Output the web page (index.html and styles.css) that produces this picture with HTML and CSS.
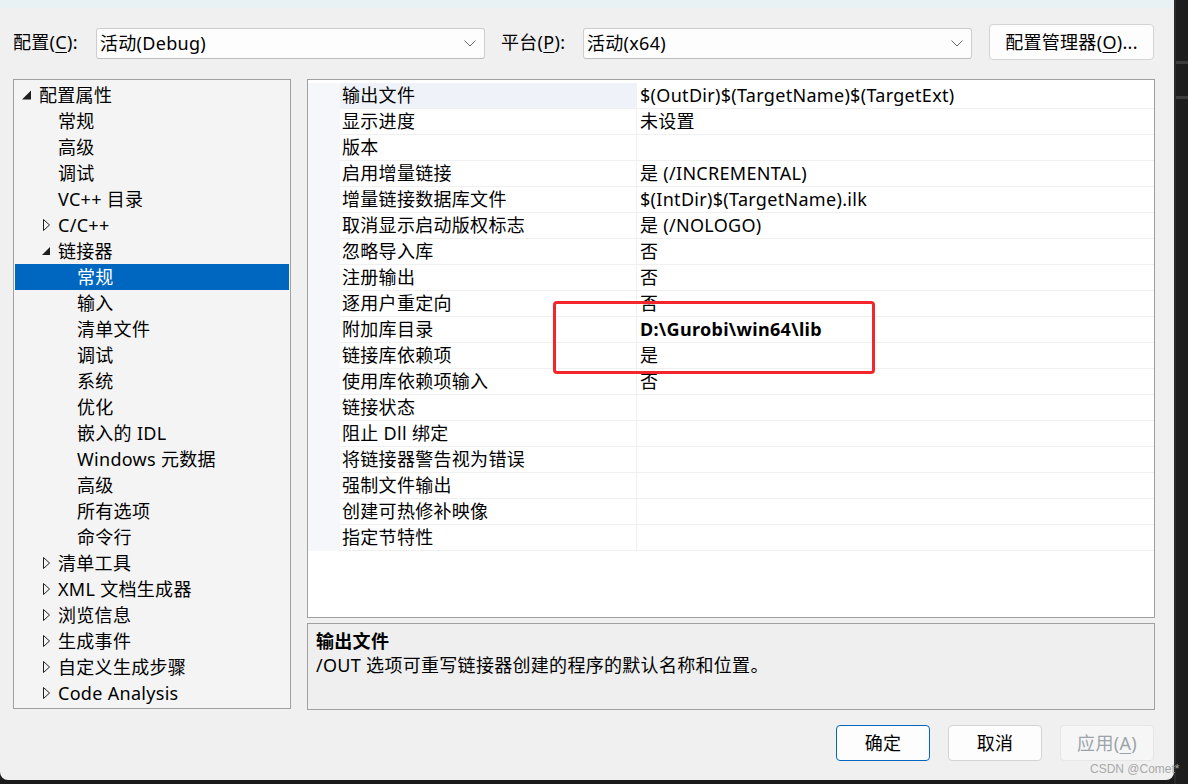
FILE: index.html
```html
<!DOCTYPE html>
<html lang="zh-CN">
<head>
<meta charset="utf-8">
<title>属性页</title>
<link rel="stylesheet" href="styles.css">
</head>
<body>
<div class="window">
  <div class="titlestrip"></div>
  <div class="toolbar">
    <span class="lbl lbl-config">配置(<u>C</u>):</span>
    <div class="combo"><span>活动(Debug)</span><svg class="chev" width="12" height="7" viewBox="0 0 12 7"><polyline points="0.5,0.5 6,6 11.5,0.5" fill="none" stroke="#6a6a6a" stroke-width="1"/></svg></div>
    <span class="lbl lbl-platform">平台(<u>P</u>):</span>
    <div class="combo"><span>活动(x64)</span><svg class="chev" width="12" height="7" viewBox="0 0 12 7"><polyline points="0.5,0.5 6,6 11.5,0.5" fill="none" stroke="#6a6a6a" stroke-width="1"/></svg></div>
    <button class="btn btn-manager">配置管理器(<u>O</u>)...</button>
  </div>

  <div class="main">
    <div class="tree">
      <div class="node lvl0"><span class="tog"><svg width="10" height="12" viewBox="0 0 10 12"><polygon points="9,1.5 9,10.5 0,10.5" fill="#1e1e1e"/></svg></span>配置属性</div>
      <div class="node lvl1"><span class="tog"></span>常规</div>
      <div class="node lvl1"><span class="tog"></span>高级</div>
      <div class="node lvl1"><span class="tog"></span>调试</div>
      <div class="node lvl1"><span class="tog"></span>VC++ 目录</div>
      <div class="node lvl1"><span class="tog"><svg width="10" height="12" viewBox="0 0 10 12"><polygon points="2.5,0.5 8.5,6 2.5,11.5" fill="none" stroke="#1e1e1e" stroke-width="1"/></svg></span>C/C++</div>
      <div class="node lvl1"><span class="tog"><svg width="10" height="12" viewBox="0 0 10 12"><polygon points="9,2 9,10 1,10" fill="#1e1e1e"/></svg></span>链接器</div>
      <div class="node lvl2 selected"><span class="tog"></span>常规</div>
      <div class="node lvl2"><span class="tog"></span>输入</div>
      <div class="node lvl2"><span class="tog"></span>清单文件</div>
      <div class="node lvl2"><span class="tog"></span>调试</div>
      <div class="node lvl2"><span class="tog"></span>系统</div>
      <div class="node lvl2"><span class="tog"></span>优化</div>
      <div class="node lvl2"><span class="tog"></span>嵌入的 IDL</div>
      <div class="node lvl2"><span class="tog"></span>Windows 元数据</div>
      <div class="node lvl2"><span class="tog"></span>高级</div>
      <div class="node lvl2"><span class="tog"></span>所有选项</div>
      <div class="node lvl2"><span class="tog"></span>命令行</div>
      <div class="node lvl1"><span class="tog"><svg width="10" height="12" viewBox="0 0 10 12"><polygon points="2.5,0.5 8.5,6 2.5,11.5" fill="none" stroke="#1e1e1e" stroke-width="1"/></svg></span>清单工具</div>
      <div class="node lvl1"><span class="tog"><svg width="10" height="12" viewBox="0 0 10 12"><polygon points="2.5,0.5 8.5,6 2.5,11.5" fill="none" stroke="#1e1e1e" stroke-width="1"/></svg></span>XML 文档生成器</div>
      <div class="node lvl1"><span class="tog"><svg width="10" height="12" viewBox="0 0 10 12"><polygon points="2.5,0.5 8.5,6 2.5,11.5" fill="none" stroke="#1e1e1e" stroke-width="1"/></svg></span>浏览信息</div>
      <div class="node lvl1"><span class="tog"><svg width="10" height="12" viewBox="0 0 10 12"><polygon points="2.5,0.5 8.5,6 2.5,11.5" fill="none" stroke="#1e1e1e" stroke-width="1"/></svg></span>生成事件</div>
      <div class="node lvl1"><span class="tog"><svg width="10" height="12" viewBox="0 0 10 12"><polygon points="2.5,0.5 8.5,6 2.5,11.5" fill="none" stroke="#1e1e1e" stroke-width="1"/></svg></span>自定义生成步骤</div>
      <div class="node lvl1"><span class="tog"><svg width="10" height="12" viewBox="0 0 10 12"><polygon points="2.5,0.5 8.5,6 2.5,11.5" fill="none" stroke="#1e1e1e" stroke-width="1"/></svg></span>Code Analysis</div>
    </div>

    <div class="right">
      <div class="grid">
        <div class="prow sel"><div class="gut"></div><div class="pname">输出文件</div><div class="pval">$(OutDir)$(TargetName)$(TargetExt)</div></div>
        <div class="prow"><div class="gut"></div><div class="pname">显示进度</div><div class="pval">未设置</div></div>
        <div class="prow"><div class="gut"></div><div class="pname">版本</div><div class="pval"></div></div>
        <div class="prow"><div class="gut"></div><div class="pname">启用增量链接</div><div class="pval">是 (/INCREMENTAL)</div></div>
        <div class="prow"><div class="gut"></div><div class="pname">增量链接数据库文件</div><div class="pval">$(IntDir)$(TargetName).ilk</div></div>
        <div class="prow"><div class="gut"></div><div class="pname">取消显示启动版权标志</div><div class="pval">是 (/NOLOGO)</div></div>
        <div class="prow"><div class="gut"></div><div class="pname">忽略导入库</div><div class="pval">否</div></div>
        <div class="prow"><div class="gut"></div><div class="pname">注册输出</div><div class="pval">否</div></div>
        <div class="prow"><div class="gut"></div><div class="pname">逐用户重定向</div><div class="pval">否</div></div>
        <div class="prow"><div class="gut"></div><div class="pname">附加库目录</div><div class="pval bold">D:\Gurobi\win64\lib</div></div>
        <div class="prow"><div class="gut"></div><div class="pname">链接库依赖项</div><div class="pval">是</div></div>
        <div class="prow"><div class="gut"></div><div class="pname">使用库依赖项输入</div><div class="pval">否</div></div>
        <div class="prow"><div class="gut"></div><div class="pname">链接状态</div><div class="pval"></div></div>
        <div class="prow"><div class="gut"></div><div class="pname">阻止 Dll 绑定</div><div class="pval"></div></div>
        <div class="prow"><div class="gut"></div><div class="pname">将链接器警告视为错误</div><div class="pval"></div></div>
        <div class="prow"><div class="gut"></div><div class="pname">强制文件输出</div><div class="pval"></div></div>
        <div class="prow"><div class="gut"></div><div class="pname">创建可热修补映像</div><div class="pval"></div></div>
        <div class="prow"><div class="gut"></div><div class="pname">指定节特性</div><div class="pval"></div></div>
      </div>
      <div class="desc">
        <div class="desc-title">输出文件</div>
        <div class="desc-text">/OUT 选项可重写链接器创建的程序的默认名称和位置。</div>
      </div>
    </div>
  </div>

  <div class="footer">
    <button class="btn btn-ok">确定</button>
    <button class="btn">取消</button>
    <button class="btn btn-disabled">应用(<u>A</u>)</button>
  </div>

  <div class="highlight"></div>
  <div class="watermark">CSDN @Comet*</div>
</div>
<div class="side">
  <div class="band band1"></div>
  <div class="band band2"></div>
</div>
</body>
</html>
```

FILE: styles.css
```css
html, body {
  margin: 0;
  padding: 0;
}
body {
  width: 1188px;
  height: 784px;
  overflow: hidden;
  background: #1b1b1b;
  display: flex;
  align-items: flex-start;
  font-family: "Noto Sans", "Noto Sans CJK SC", sans-serif;
  font-size: 18px;
  letter-spacing: 0.3px;
  color: #000;
}
.window {
  position: relative;
  width: 1174px;
  height: 780px;
  background: #f0f0f0;
  border-radius: 0 0 8px 8px;
  display: flex;
  flex-direction: column;
  flex-shrink: 0;
}
.titlestrip {
  height: 8px;
  background: #e8f1f4;
}
.toolbar {
  margin-top: 16px;
  height: 36px;
  padding-left: 13px;
  display: flex;
  align-items: center;
}
.lbl {
  line-height: 24px;
  white-space: nowrap;
}
.lbl-config { width: 83px; }
.lbl-platform { width: 82px; margin-left: 16px; }
u { text-decoration-thickness: 1px; text-underline-offset: 3px; }
.combo {
  box-sizing: border-box;
  width: 389px;
  height: 31px;
  margin-top: 2px;
  background: #fdfdfd;
  border: 1px solid #cdcdcd;
  border-bottom-color: #bdbdbd;
  border-radius: 3px;
  display: flex;
  align-items: center;
  justify-content: space-between;
  padding: 0 8px 0 3px;
  line-height: 24px;
}
.chev { display: block; }
.btn {
  box-sizing: border-box;
  font-family: inherit;
  font-size: 18px;
  letter-spacing: 0.3px;
  color: #000;
  background: #fdfdfd;
  border: 1px solid #d3d3d3;
  border-radius: 4px;
  height: 36px;
  width: 94px;
  padding: 0;
  line-height: 24px;
}
.btn-manager {
  width: 165px;
  margin-left: 17px;
}

.main {
  margin-top: 19px;
  height: 631px;
  padding-left: 13px;
  display: flex;
  gap: 16px;
}
.tree {
  box-sizing: border-box;
  width: 278px;
  height: 630px;
  border: 1px solid #a0a0a0;
  background: #f4f4f4;
  padding: 2px 1px 0;
}
.node {
  height: 26px;
  line-height: 26px;
  display: flex;
  align-items: center;
  white-space: nowrap;
}
.lvl0 { padding-left: 7px; }
.lvl1 { padding-left: 26px; }
.lvl2 { padding-left: 45px; }
.tog {
  width: 17px;
  height: 26px;
  display: flex;
  align-items: center;
  flex-shrink: 0;
}
.tog svg { display: block; }
.node.selected {
  background: #0067c0;
  color: #fff;
}

.right {
  width: 848px;
  display: flex;
  flex-direction: column;
  gap: 5px;
}
.grid {
  box-sizing: border-box;
  height: 539px;
  border: 1px solid #a0a0a0;
  background: #fff;
  padding-top: 3px;
}
.prow {
  display: grid;
  grid-template-columns: 32px 296px 1fr;
  height: 26px;
}
.gut {
  background: #f5f7fa;
}
.pname, .pval {
  box-sizing: border-box;
  height: 26px;
  line-height: 25px;
  border-bottom: 1px solid #f0f0f0;
  white-space: nowrap;
}
.pname { padding-left: 2px; }
.pval {
  padding-left: 3px;
  border-left: 1px solid #f0f0f0;
}
.prow.sel .pname { background: #eff3f9; }
.pval.bold { font-weight: bold; }

.desc {
  box-sizing: border-box;
  height: 87px;
  border: 1px solid #a0a0a0;
  background: #efefef;
  padding: 5px 8px 0;
  line-height: 24px;
}
.desc-title { font-weight: bold; }

.footer {
  margin-top: 15px;
  display: flex;
  justify-content: flex-end;
  gap: 18px;
  padding-right: 20px;
}
.btn-ok {
  border-color: #0067c0;
  background: #fdfdfd;
}
.btn-disabled {
  background: #f6f6f6;
  border-color: #e6e6e6;
  color: #9da3aa;
}

.highlight {
  position: absolute;
  left: 553px;
  top: 301px;
  width: 322px;
  height: 73px;
  box-sizing: border-box;
  border: 3px solid #f3272b;
  border-radius: 4px;
}
.watermark {
  position: absolute;
  left: 1090px;
  top: 761px;
  font-family: "Liberation Sans", sans-serif;
  font-size: 12px;
  letter-spacing: 0;
  line-height: 16px;
  color: #a9a9a9;
  white-space: nowrap;
}

.side {
  flex: 1;
  height: 784px;
  background: #1e1e1e;
  border-left: 2px solid #2b2b2b;
  display: flex;
  flex-direction: column;
}
.band {
  height: 3px;
  background: #3d3d3d;
}
.band1 { margin-top: 61px; }
.band2 { margin-top: 32px; }
```
